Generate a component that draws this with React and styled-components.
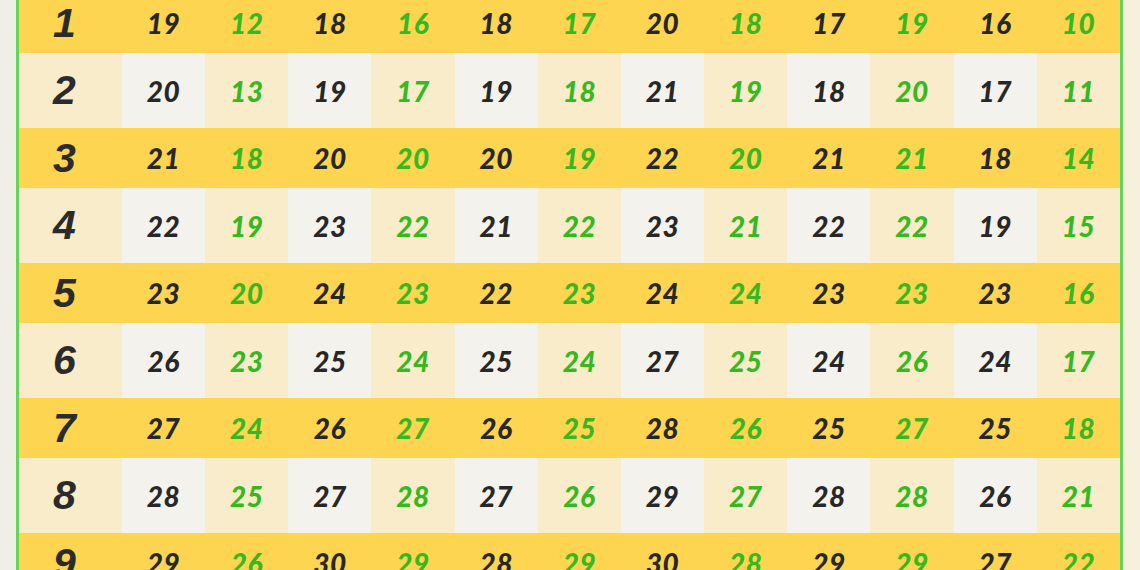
import React from 'react';
import styled, { createGlobalStyle } from 'styled-components';

const GlobalStyle = createGlobalStyle`
  html, body {
    margin: 0;
    padding: 0;
    height: 100%;
    overflow: hidden;
    background: #f2efe9;
  }
`;

// Fondo de la página
const Page = styled.div`
  display: flex;
  width: 1140px;
  height: 570px;
  overflow: hidden;
  background: #f2efe9;
`;

const LeftStrip = styled.div`
  width: 16px;
  flex-shrink: 0;
  background: #f1eee8;
`;

const RightStrip = styled.div`
  flex: 1;
  background: #f7f0dd;
`;

const Table = styled.div`
  width: 1101px;
  flex-shrink: 0;
  border-left: 3px solid #66d35a;
  border-right: 3px solid #66d35a;
  display: flex;
  flex-direction: column;
  margin-top: -7px;
`;

const Row = styled.div`
  display: grid;
  grid-template-columns: 103px repeat(12, 1fr);
  height: ${p => (p.$yellow ? 60 : 75)}px;
  flex-shrink: 0;
  background: ${p => (p.$yellow ? '#fdd550' : '#f8ecca')};
`;

const Label = styled.div`
  display: flex;
  align-items: center;
  justify-content: center;
  padding-right: 12px;
  font-family: 'Liberation Sans', Arial, sans-serif;
  font-weight: 700;
  font-style: italic;
  font-size: 41px;
  color: #2b2b2b;
`;

const Cell = styled.div`
  display: flex;
  align-items: center;
  justify-content: center;
  font-family: Lato, 'Open Sans', sans-serif;
  font-weight: 900;
  font-style: italic;
  font-size: 28px;
  letter-spacing: 0.5px;
  color: ${p => (p.$green ? '#35b820' : '#272727')};
  background: ${p => (p.$white ? '#f4f2ed' : 'transparent')};
`;

const data = [
  [19, 12, 18, 16, 18, 17, 20, 18, 17, 19, 16, 10],
  [20, 13, 19, 17, 19, 18, 21, 19, 18, 20, 17, 11],
  [21, 18, 20, 20, 20, 19, 22, 20, 21, 21, 18, 14],
  [22, 19, 23, 22, 21, 22, 23, 21, 22, 22, 19, 15],
  [23, 20, 24, 23, 22, 23, 24, 24, 23, 23, 23, 16],
  [26, 23, 25, 24, 25, 24, 27, 25, 24, 26, 24, 17],
  [27, 24, 26, 27, 26, 25, 28, 26, 25, 27, 25, 18],
  [28, 25, 27, 28, 27, 26, 29, 27, 28, 28, 26, 21],
  [29, 26, 30, 29, 28, 29, 30, 28, 29, 29, 27, 22],
];

const App = () => (
  <>
    <GlobalStyle />
    <Page>
      <LeftStrip />
      <Table>
        {data.map((values, r) => {
          const yellow = r % 2 === 0;
          return (
            <Row key={r} $yellow={yellow}>
              <Label>{r + 1}</Label>
              {values.map((v, c) => (
                <Cell key={c} $green={c % 2 === 1} $white={!yellow && c % 2 === 0}>
                  {v}
                </Cell>
              ))}
            </Row>
          );
        })}
      </Table>
      <RightStrip />
    </Page>
  </>
);

export default App;
